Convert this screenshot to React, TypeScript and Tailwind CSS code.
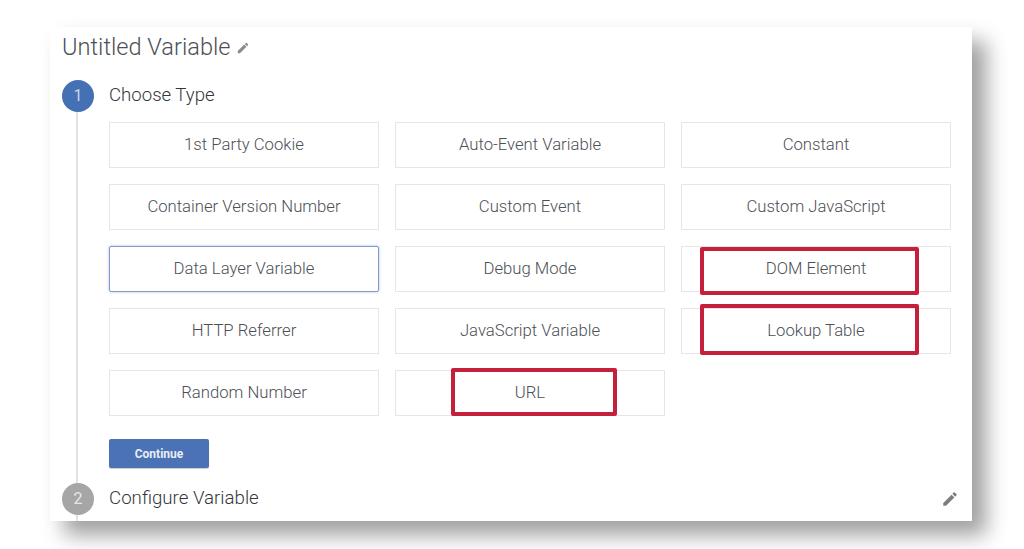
const variableTypes = [
  "1st Party Cookie",
  "Auto-Event Variable",
  "Constant",
  "Container Version Number",
  "Custom Event",
  "Custom JavaScript",
  "Data Layer Variable",
  "Debug Mode",
  "DOM Element",
  "HTTP Referrer",
  "JavaScript Variable",
  "Lookup Table",
  "Random Number",
  "URL",
];

const PencilIcon = ({ className }: { className: string }) => (
  <svg viewBox="0 0 24 24" className={className} fill="currentColor">
    <path d="M3 17.25V21h3.75L17.81 9.94l-3.75-3.75L3 17.25zM20.71 7.04c.39-.39.39-1.02 0-1.41l-2.34-2.34c-.39-.39-1.02-.39-1.41 0l-1.83 1.83 3.75 3.75 1.83-1.83z" />
  </svg>
);

const TypeButton = ({ label }: { label: string }) => {
  const focused = label === "Data Layer Variable";
  return (
    <div
      className={`relative h-[46px] flex items-center justify-center bg-white text-[16.7px] font-light text-[#4c5056] ${
        focused
          ? "border border-[#7f9bd0] rounded-[2px] shadow-[0_0_3px_rgba(66,107,178,0.45)]"
          : "border border-[#e6e6e6]"
      }`}
    >
      {label}
      {label === "DOM Element" && (
        <div className="absolute left-[18px] top-0 w-[219px] h-[48px] border-[4px] border-[#c4203a] rounded-[2px]" />
      )}
      {label === "Lookup Table" && (
        <div className="absolute left-[18px] top-[-5px] w-[219px] h-[51px] border-[4px] border-[#c4203a] rounded-[2px]" />
      )}
      {label === "URL" && (
        <div className="absolute left-[55px] top-[-3px] w-[166px] h-[48px] border-[4px] border-[#c4203a] rounded-[2px]" />
      )}
    </div>
  );
};

export default function App() {
  return (
    <div className="w-[1024px] h-[549px] overflow-hidden bg-white pt-[27px] pl-[50px] font-['Roboto',sans-serif]">
      <div className="w-[922px] h-[494px] bg-white shadow-[14px_14px_20px_rgba(0,0,0,0.38)] pl-[12px] overflow-hidden">
        <div className="h-[53px] pb-[12px] flex items-center gap-[5px]">
          <h1 className="text-[23.6px] font-light text-[#4c5056] leading-none">
            Untitled Variable
          </h1>
          <PencilIcon className="w-[14px] h-[14px] text-[#8a8a8a]" />
        </div>

        <div className="flex items-center h-[32px]">
          <div className="w-[32px] h-[32px] rounded-full bg-[#4470b4] text-[#c9d6ea] text-[16px] flex items-center justify-center">
            1
          </div>
          <span className="ml-[15px] text-[18.6px] font-light text-[#33373c]">Choose Type</span>
        </div>

        <div className="ml-[14px] pl-[31px] border-l-2 border-[#e2e2e2] pt-[10px] h-[371px]">
          <div className="grid grid-cols-[270px_270px_270px] gap-x-[16px] gap-y-[16px]">
            {variableTypes.map((label) => (
              <TypeButton key={label} label={label} />
            ))}
          </div>
          <button className="mt-[23px] w-[100px] h-[29px] rounded-[2px] bg-[#4a72b4] text-[#e8eef7] text-[12px] font-bold shadow-[0_1px_1px_rgba(0,0,0,0.2)]">
            Continue
          </button>
        </div>

        <div className="flex items-center justify-between h-[32px] pr-[13px]">
          <div className="flex items-center">
            <div className="w-[32px] h-[32px] rounded-full bg-[#a6a6a6] text-[#e6e6e6] text-[16px] flex items-center justify-center">
              2
            </div>
            <span className="ml-[15px] -mt-[2px] text-[18.7px] font-light text-[#33373c]">Configure Variable</span>
          </div>
          <PencilIcon className="w-[18px] h-[18px] text-[#7d7d7d]" />
        </div>

        <div className="ml-[14px] w-[2px] h-[8px] bg-[#e2e2e2]" />
      </div>
    </div>
  );
}
